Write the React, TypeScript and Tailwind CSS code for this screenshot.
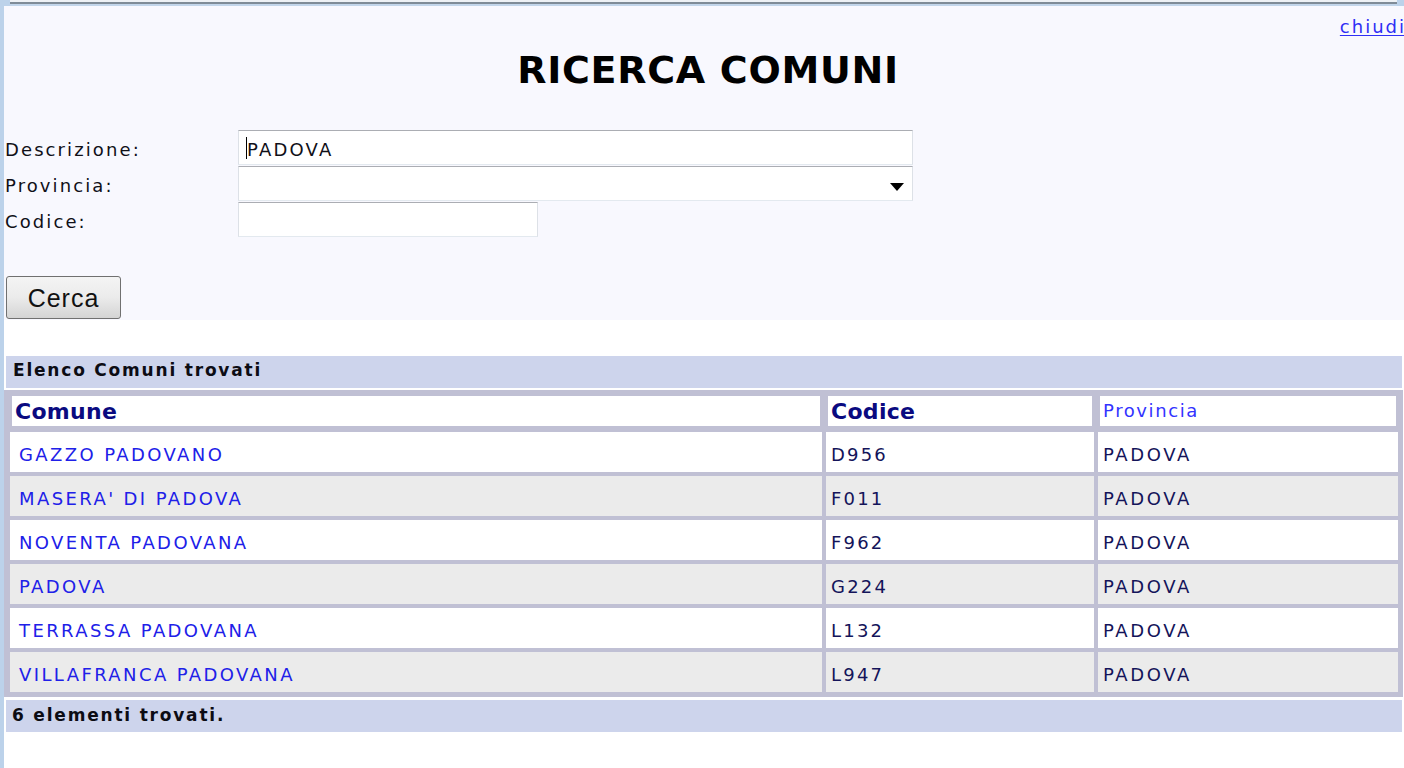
import React from "react";

const rows = [
  { comune: "GAZZO PADOVANO", codice: "D956", provincia: "PADOVA" },
  { comune: "MASERA' DI PADOVA", codice: "F011", provincia: "PADOVA" },
  { comune: "NOVENTA PADOVANA", codice: "F962", provincia: "PADOVA" },
  { comune: "PADOVA", codice: "G224", provincia: "PADOVA" },
  { comune: "TERRASSA PADOVANA", codice: "L132", provincia: "PADOVA" },
  { comune: "VILLAFRANCA PADOVANA", codice: "L947", provincia: "PADOVA" },
];

function FieldRow({ label, children }: { label: string; children: React.ReactNode }) {
  return (
    <div className="flex h-[36px]">
      <div className="w-[234px] shrink-0 pl-[1px] pt-[11px] text-[18px] leading-[18px] tracking-[2.1px] text-[#101018]">
        {label}
      </div>
      {children}
    </div>
  );
}

const inputBox =
  "h-[35px] bg-white border border-t-[#abadb3] border-x-[#dde1e7] border-b-[#e3e9ef]";

export default function App() {
  return (
    <div className="flex w-[1404px] h-[768px] overflow-hidden bg-white font-['DejaVu_Sans',sans-serif]">
      <div className="w-[4px] shrink-0 bg-[#bcd2ea]" />
      <div className="flex flex-col w-[1400px]">
        {/* bottom edge of the frame above */}
        <div className="h-[6px] bg-[#bcd2ea] pl-[6px]">
          <div className="flex flex-col w-[1387px]">
            <div className="h-[2px] bg-[#eef1f5]" />
            <div className="h-[2px] bg-[#7f8b97]" />
            <div className="h-[2px] bg-[#c2d5ea]" />
          </div>
        </div>

        <div className="bg-[#f8f8fe] pb-[1px]">
          <div className="flex justify-end pt-[12px] mr-[-2px]">
            <a
              href="#"
              className="text-[18px] leading-[18px] tracking-[2px] text-[#2f2ff5] underline decoration-1 underline-offset-2"
            >
              chiudi
            </a>
          </div>

          <h1 className="mt-[15px] pl-[8px] text-center text-[38px] leading-[38px] font-bold tracking-[0.7px] text-black">
            RICERCA COMUNI
          </h1>

          <div className="mt-[41px] flex flex-col">
            <FieldRow label="Descrizione:">
              <div className={`relative w-[675px] ${inputBox}`}>
                <span className="absolute left-[7px] top-[6px] w-[1px] h-[22px] bg-black" />
                <div className="pl-[8px] pt-[10px] text-[18px] leading-[18px] tracking-[2.2px] text-[#101018]">
                  PADOVA
                </div>
              </div>
            </FieldRow>
            <FieldRow label="Provincia:">
              <div className={`w-[675px] flex justify-end items-end pr-[8px] pb-[9px] ${inputBox}`}>
                <svg width="14" height="8" viewBox="0 0 14 8">
                  <polygon points="0,0 14,0 7,8" fill="#000" />
                </svg>
              </div>
            </FieldRow>
            <FieldRow label="Codice:">
              <div className={`w-[300px] ${inputBox}`} />
            </FieldRow>
          </div>

          <button className="mt-[38px] ml-[2px] flex items-center justify-center pt-[1px] w-[115px] h-[43px] rounded-[3px] border border-[#707070] bg-gradient-to-b from-[#f4f4f4] via-[#ebebeb] to-[#d4d4d4] font-['Liberation_Sans',Arial,sans-serif] text-[25px] leading-[25px] tracking-[1px] text-[#111]">
            Cerca
          </button>
        </div>

        <div className="mt-[36px] ml-[2px] w-[1396px] h-[32px] bg-[#cdd4ec] pl-[7px] pt-[6px] text-[17px] leading-[17px] font-bold tracking-[1.8px] text-[#0c0c14]">
          Elenco Comuni trovati
        </div>

        <div className="mt-[2px] w-[1399px] bg-[#c0c0d4] pt-[6px] pl-[6px] pr-[5px] pb-[5px]">
          <div className="grid grid-cols-[812px_268px_300px] gap-[4px]">
            <div className="mx-[2px] mb-[2px] h-[30px] bg-white pl-[3px] pt-[5px] text-[22px] leading-[22px] font-bold tracking-[0.3px] text-[#0a0a80]">
              Comune
            </div>
            <div className="mx-[2px] mb-[2px] h-[30px] bg-white pl-[3px] pt-[5px] text-[22px] leading-[22px] font-bold tracking-[0.3px] text-[#0a0a80]">
              Codice
            </div>
            <div className="mx-[2px] mb-[2px] h-[30px] bg-white pl-[3px] pt-[6px] text-[18px] leading-[18px] tracking-[1.6px] text-[#3333ff]">
              Provincia
            </div>

            {rows.map((r, i) => {
              const bg = i % 2 === 0 ? "bg-white" : "bg-[#ebebeb]";
              return (
                <React.Fragment key={r.codice}>
                  <div className={`${bg} h-[40px] pl-[9px] pt-[14px] text-[18px] leading-[18px] tracking-[2.4px] text-[#2020e8]`}>
                    <a href="#">{r.comune}</a>
                  </div>
                  <div className={`${bg} h-[40px] pl-[5px] pt-[14px] text-[18px] leading-[18px] tracking-[2.2px] text-[#14145a]`}>
                    {r.codice}
                  </div>
                  <div className={`${bg} h-[40px] pl-[5px] pt-[14px] text-[18px] leading-[18px] tracking-[2.6px] text-[#14145a]`}>
                    {r.provincia}
                  </div>
                </React.Fragment>
              );
            })}
          </div>
        </div>

        <div className="mt-[3px] ml-[2px] w-[1396px] h-[32px] bg-[#cdd4ec] pl-[6px] pt-[7px] text-[17px] leading-[17px] font-bold tracking-[1.8px] text-[#0c0c14]">
          6 elementi trovati.
        </div>
      </div>
    </div>
  );
}
